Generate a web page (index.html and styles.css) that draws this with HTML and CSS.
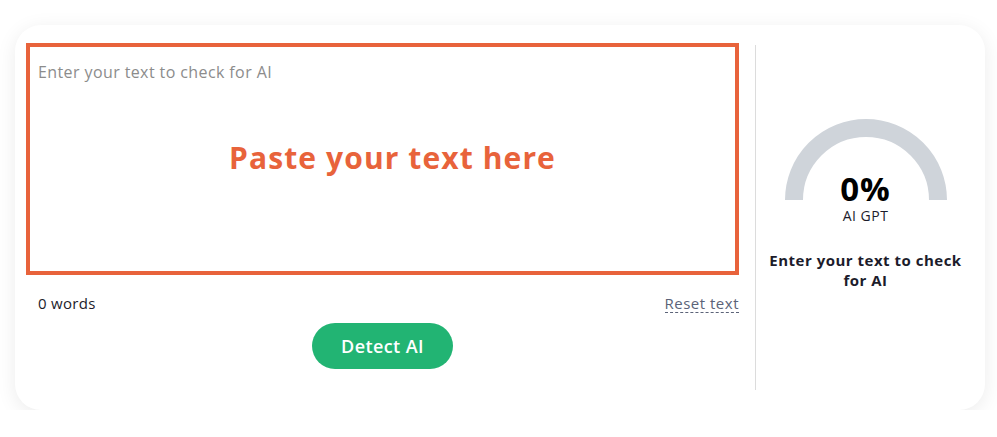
FILE: index.html
```html
<!DOCTYPE html>
<html lang="en">
<head>
<meta charset="utf-8">
<title>AI Detector</title>
<link rel="stylesheet" href="styles.css">
</head>
<body>
<div class="card">
  <div class="editor">
    <div class="input-box">
      <div class="placeholder">Enter your text to check for AI</div>
      <div class="paste-hint">Paste your text here</div>
    </div>
    <div class="meta-row">
      <span class="word-count">0 words</span>
      <span class="reset">Reset text</span>
    </div>
    <div class="actions">
      <button class="detect-btn" type="button">Detect AI</button>
    </div>
  </div>
  <div class="divider"></div>
  <div class="result">
    <div class="gauge">
      <svg class="gauge-svg" width="162" height="81" viewBox="0 0 162 81">
        <path d="M9 81 A72 72 0 0 1 153 81" fill="none" stroke="#cfd4da" stroke-width="18"/>
      </svg>
      <div class="gauge-value">0%</div>
    </div>
    <div class="gauge-label">AI GPT</div>
    <div class="result-text">Enter your text to check for AI</div>
  </div>
</div>
</body>
</html>
```
FILE: styles.css
```css
* { box-sizing: border-box; }
html, body { margin: 0; background: #ffffff; }
body {
  padding: 25px 12px 0 15px;
  font-family: "Open Sans", "Noto Sans", sans-serif;
  color: #1c1c2b;
}
.card {
  display: flex;
  width: 970px;
  height: 385px;
  padding: 18px 10px 20px 11px;
  background: #fff;
  border-radius: 26px;
  box-shadow: 0 4px 20px rgba(0, 0, 0, 0.08);
}
.editor {
  width: 713px;
  display: flex;
  flex-direction: column;
}
.input-box {
  position: relative;
  height: 232px;
  border: 4px solid #e8633b;
  padding: 15px 8px;
}
.placeholder {
  font-size: 16px;
  line-height: 20px;
  letter-spacing: 0.4px;
  color: #8c8c8c;
}
.paste-hint {
  position: absolute;
  left: 20px;
  right: 0;
  top: 93px;
  text-align: center;
  font-size: 30px;
  line-height: 36px;
  letter-spacing: 1.1px;
  font-weight: 700;
  color: #e8633b;
}
.meta-row {
  display: flex;
  justify-content: space-between;
  align-items: center;
  padding: 18px 0 0 12px;
  font-size: 15px;
  line-height: 20px;
}
.word-count { color: #1c1c2b; letter-spacing: 0.3px; }
.reset {
  color: #5b6378;
  border-bottom: 1px dashed #5b6378;
  line-height: 18px;
  letter-spacing: 0.5px;
}
.actions {
  display: flex;
  justify-content: center;
  padding-top: 10px;
}
.detect-btn {
  width: 141px;
  height: 46px;
  border: none;
  border-radius: 23px;
  background: #22b473;
  color: #fff;
  font-family: inherit;
  font-size: 18px;
  letter-spacing: 0.4px;
  font-weight: 600;
}
.divider {
  width: 1px;
  margin: 2px 0 0 16px;
  height: 345px;
  background: #dcdcdc;
}
.result {
  flex: 1;
  display: flex;
  flex-direction: column;
  align-items: center;
  padding-top: 76px;
}
.gauge {
  position: relative;
  width: 162px;
  height: 81px;
}
.gauge-svg { display: block; }
.gauge-value {
  position: absolute;
  left: 0;
  right: 0;
  bottom: -3px;
  text-align: center;
  font-size: 33px;
  line-height: 28px;
  letter-spacing: 1px;
  font-weight: 700;
  color: #000;
}
.gauge-label {
  margin-top: 8px;
  font-size: 14px;
  line-height: 16px;
  letter-spacing: 0.5px;
  color: #1c1c2b;
}
.result-text {
  margin-top: 26px;
  width: 210px;
  text-align: center;
  font-size: 15px;
  line-height: 20px;
  letter-spacing: 0.5px;
  font-weight: 700;
  color: #1c1c2b;
}
```
